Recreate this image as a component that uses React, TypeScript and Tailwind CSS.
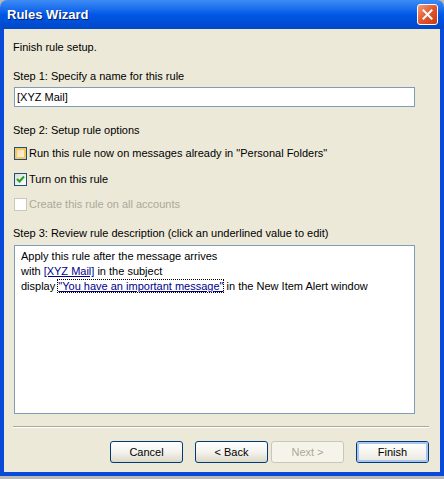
import { ReactNode } from "react";

const font = { fontFamily: '"Liberation Sans", Arial, sans-serif' };

function XpCheckbox({ state }: { state: "hover" | "checked" | "disabled" }) {
  if (state === "disabled") {
    return <div className="w-[13px] h-[13px] border border-[#cac8bb] bg-white shrink-0" />;
  }
  return (
    <div className="w-[13px] h-[13px] border border-[#1c5180] shrink-0 bg-gradient-to-br from-[#dcdcd7] to-white flex items-center justify-center">
      {state === "hover" && (
        <div className="w-[11px] h-[11px] border-2 border-[#f9c75c] bg-gradient-to-br from-[#f0dcb0] to-[#fdf3dc]" />
      )}
      {state === "checked" && (
        <svg width="9" height="9" viewBox="0 0 9 9">
          <path d="M1 4 L3.5 6.5 L8 1.5" fill="none" stroke="#21a121" strokeWidth="2" />
        </svg>
      )}
    </div>
  );
}

function Option({ state, children }: { state: "hover" | "checked" | "disabled"; children: ReactNode }) {
  return (
    <div className="flex items-center gap-[2px] h-[13px]">
      <XpCheckbox state={state} />
      <span className={state === "disabled" ? "text-[#aca899]" : "text-black"}>{children}</span>
    </div>
  );
}

function XpButton({ children, kind }: { children: ReactNode; kind?: "default" | "disabled" }) {
  if (kind === "disabled") {
    return (
      <div className="w-[73px] h-[22px] rounded-[3px] border border-[#c9c7ba] bg-[#f5f4ea] text-[#aca899] flex items-center justify-center">
        {children}
      </div>
    );
  }
  return (
    <div className="w-[73px] h-[22px] rounded-[3px] border border-[#003c74] bg-gradient-to-b from-white via-[#f4f3ee] to-[#dcd8c8] flex items-center justify-center">
      {kind === "default" ? (
        <div className="w-[71px] h-[20px] rounded-[2px] border-2 border-[#a8c4f4] flex items-center justify-center bg-gradient-to-b from-white to-[#eceadf]">
          {children}
        </div>
      ) : (
        children
      )}
    </div>
  );
}

export default function App() {
  return (
    <div className="w-[444px] h-[479px] bg-[#b9b9b9] text-[11px] leading-[13px]" style={font}>
      {/* title bar */}
      <div className="h-[29px] rounded-t-[7px] bg-gradient-to-b from-[#3d8cf5] via-[#0058e6] to-[#0047c8] flex items-center justify-between pl-[7px] pr-[6px]">
        <span className="text-white font-bold text-[13px] [text-shadow:1px_1px_0_#0a1f6e]">Rules Wizard</span>
        <div className="w-[21px] h-[21px] rounded-[3px] border border-white bg-gradient-to-br from-[#f29a7c] via-[#e2572d] to-[#c83a12] flex items-center justify-center">
          <svg width="11" height="11" viewBox="0 0 11 11">
            <path d="M1.5 1.5 L9.5 9.5 M9.5 1.5 L1.5 9.5" stroke="white" strokeWidth="2" strokeLinecap="square" />
          </svg>
        </div>
      </div>

      {/* body */}
      <div className="h-[447px] border-x-4 border-b-4 border-[#0a4ad8] bg-[#ece9d8] flex flex-col pl-[9px] pr-[24px] pt-[12px]">
        <div>Finish rule setup.</div>

        <div className="mt-[16px]">Step 1: Specify a name for this rule</div>
        <div className="mt-[4px] h-[20px] w-[401px] ml-[1px] border border-[#7f9db9] bg-white flex items-center px-[2px]">
          [XYZ Mail]
        </div>

        <div className="mt-[17px]">Step 2: Setup rule options</div>
        <div className="mt-[10px] flex flex-col gap-[13px] ml-[1px]">
          <Option state="hover">Run this rule now on messages already in &quot;Personal Folders&quot;</Option>
          <Option state="checked">Turn on this rule</Option>
          <div className="mt-[-1px]">
            <Option state="disabled">Create this rule on all accounts</Option>
          </div>
        </div>

        <div className="mt-[16px]">Step 3: Review rule description (click an underlined value to edit)</div>
        <div className="mt-[5px] ml-[1px] w-[401px] h-[169px] border border-[#7f9db9] bg-white pl-[6px] pt-[3px] leading-[15px]">
          <div>Apply this rule after the message arrives</div>
          <div>
            with <span className="text-[#00008b] underline">[XYZ Mail]</span> in the subject
          </div>
          <div>
            display{" "}
            <span className="text-[#00008b] underline outline outline-1 outline-dotted outline-black">
              &quot;You have an important message&quot;
            </span>{" "}
            in the New Item Alert window
          </div>
        </div>

        <div className="mt-[12px] h-[2px] w-[416px] border-t border-[#aca899] border-b border-b-white" />

        <div className="mt-[13px] flex justify-end -mr-[13px]">
          <XpButton>Cancel</XpButton>
          <div className="ml-[12px]">
            <XpButton>&lt; Back</XpButton>
          </div>
          <div className="ml-[3px]">
            <XpButton kind="disabled">Next &gt;</XpButton>
          </div>
          <div className="ml-[12px]">
            <XpButton kind="default">Finish</XpButton>
          </div>
        </div>
      </div>
    </div>
  );
}
